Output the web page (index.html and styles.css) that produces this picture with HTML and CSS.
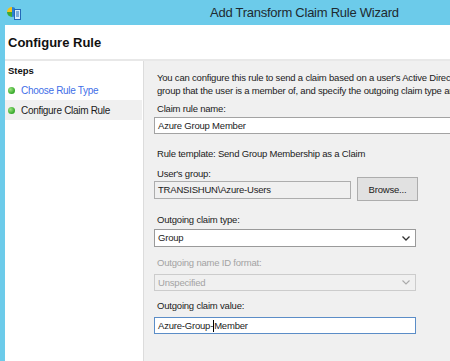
FILE: index.html
```html
<!DOCTYPE html>
<html lang="en">
<head>
    <meta charset="UTF-8">
    <title>Add Transform Claim Rule Wizard</title>
    <link rel="stylesheet" href="styles.css">
</head>
<body>

    <!-- Title Bar -->
    <div class="titlebar">
        <svg class="app-icon" width="16" height="16" viewBox="0 0 16 16">
            <path d="M6 2 A5 5 0 0 0 1 7 L6 7 Z" fill="#f2c21b"/>
            <path d="M1 7 A5 5 0 0 0 6 12 L6 7 Z" fill="#3ba935"/>
            <path d="M6 2 A5 5 0 0 1 9 3 L9 11 A5 5 0 0 1 6 12 Z" fill="#2a7fd4"/>
            <rect x="8.5" y="4.5" width="6" height="10" fill="#d4ecfb" stroke="#2468b8"/>
            <line x1="10" y1="7" x2="13" y2="7" stroke="#2468b8"/>
            <line x1="10" y1="9" x2="13" y2="9" stroke="#2468b8"/>
            <line x1="10" y1="11" x2="13" y2="11" stroke="#2468b8"/>
        </svg>
        <div class="title">Add Transform Claim Rule Wizard</div>
    </div>

    <div class="frame">
        <div class="page-header">Configure Rule</div>

        <div class="page-body">
            <!-- Steps -->
            <div class="steps">
                <div class="steps-title">Steps</div>
                <div class="step">
                    <span class="bullet"></span>
                    <span class="step-link">Choose Rule Type</span>
                </div>
                <div class="step current">
                    <span class="bullet"></span>
                    <span>Configure Claim Rule</span>
                </div>
            </div>

            <!-- Rule Form -->
            <div class="content">
                <p class="intro">You can configure this rule to send a claim based on a user's Active Directory<br>group that the user is a member of, and specify the outgoing claim type and value to issue.</p>

                <div class="label first">Claim rule name:</div>
                <div class="field wide">Azure Group Member</div>

                <div class="label template">Rule template: Send Group Membership as a Claim</div>

                <div class="label">User's group:</div>
                <div class="group-row">
                    <div class="field readonly">TRANSISHUN\Azure-Users</div>
                    <div class="button">Browse...</div>
                </div>

                <div class="label spaced">Outgoing claim type:</div>
                <div class="field select">
                    <span>Group</span>
                    <svg width="8" height="5" viewBox="0 0 8 5"><path d="M0.5 0.5 L4 4 L7.5 0.5" fill="none" stroke="#333" stroke-width="1.3"/></svg>
                </div>

                <div class="label disabled">Outgoing name ID format:</div>
                <div class="field select inactive">
                    <span>Unspecified</span>
                    <svg width="8" height="5" viewBox="0 0 8 5"><path d="M0.5 0.5 L4 4 L7.5 0.5" fill="none" stroke="#aaa" stroke-width="1.1"/></svg>
                </div>

                <div class="label value">Outgoing claim value:</div>
                <div class="field focused">Azure-Group-<span class="caret"></span>Member</div>
            </div>
        </div>
    </div>

</body>
</html>
```

FILE: styles.css
```css
* {
    margin: 0;
    padding: 0;
    box-sizing: border-box;
    font-family: "Liberation Sans", Arial, sans-serif;
}
body {
    width: 450px;
    height: 361px;
    overflow: hidden;
    background: #6ccbea;
    color: #1b1b1b;
    font-size: 9.5px;
    letter-spacing: -0.2px;
}
.titlebar {
    height: 25px;
    display: flex;
    align-items: center;
    padding-left: 6px;
}
.app-icon {
    flex: none;
}
.title {
    margin-left: 188px;
    font-size: 13px;
    letter-spacing: -0.25px;
    color: #1e2a30;
}
.frame {
    margin-left: 5px;
    height: 336px;
    background: #fff;
    display: flex;
    flex-direction: column;
}
.page-header {
    height: 36px;
    padding: 10px 0 0 3px;
    border-bottom: 2px solid #e8e8e8;
    font-size: 13px;
    font-weight: bold;
    letter-spacing: 0;
    color: #111;
}
.page-body {
    flex: 1;
    display: flex;
}
.steps {
    width: 139px;
    border-right: 1px solid #dcdcdc;
    background: #fff;
}
.steps-title {
    height: 19px;
    line-height: 19px;
    padding-left: 3px;
    font-weight: bold;
    letter-spacing: 0;
    color: #111;
}
.step {
    height: 20px;
    display: flex;
    align-items: center;
    padding-left: 3px;
    margin-right: 1px;
    font-size: 10px;
    letter-spacing: -0.3px;
}
.step.current {
    background: #f0f0f0;
}
.bullet {
    width: 7px;
    height: 7px;
    border-radius: 50%;
    background: radial-gradient(circle at 35% 35%, #9be27f, #35a82a 70%);
    margin-right: 6px;
}
.step-link {
    color: #3f6fe8;
}
.content {
    flex: 1;
    background: #f0f0f0;
    padding: 10px 0 0 10px;
    overflow: hidden;
    white-space: nowrap;
}
.intro {
    line-height: 13px;
    padding-left: 3px;
}
.label {
    line-height: 13px;
    padding-left: 3px;
    margin-top: 7px;
}
.label.first {
    margin-top: 5px;
}
.label.template {
    margin-top: 13px;
}
.label.spaced {
    margin-top: 14px;
}
.label.disabled {
    margin-top: 9px;
    color: #a3a3a3;
}
.label.value {
    margin-top: 8px;
}
.field {
    height: 18px;
    margin-top: 2px;
    border: 1px solid #a3a3a3;
    background: #fff;
    padding-left: 3px;
    line-height: 16px;
    display: flex;
    align-items: center;
}
.field.wide {
    width: 310px;
    height: 17px;
}
.group-row {
    display: flex;
    align-items: center;
    margin-top: 1px;
}
.field.readonly {
    width: 197px;
    margin-top: 0;
    background: #f0f0f0;
    border-color: #adadad;
}
.button {
    width: 61px;
    height: 24px;
    margin: -4px 0 -2px 6px;
    border: 1px solid #adadad;
    background: #e1e1e1;
    display: flex;
    align-items: center;
    justify-content: center;
}
.field.select {
    width: 262px;
    margin-top: 3px;
    justify-content: space-between;
    padding-right: 5px;
    border-color: #9a9a9a;
}
.field.select.inactive {
    height: 17px;
    margin-top: 5px;
    background: #f0f0f0;
    border-color: #cccccc;
    color: #a3a3a3;
}
.field.focused {
    width: 262px;
    height: 17px;
    margin-top: 5px;
    border-color: #5b8dc7;
}
.caret {
    display: inline-block;
    width: 0;
    height: 12px;
    border-left: 1px solid #000;
}
```
